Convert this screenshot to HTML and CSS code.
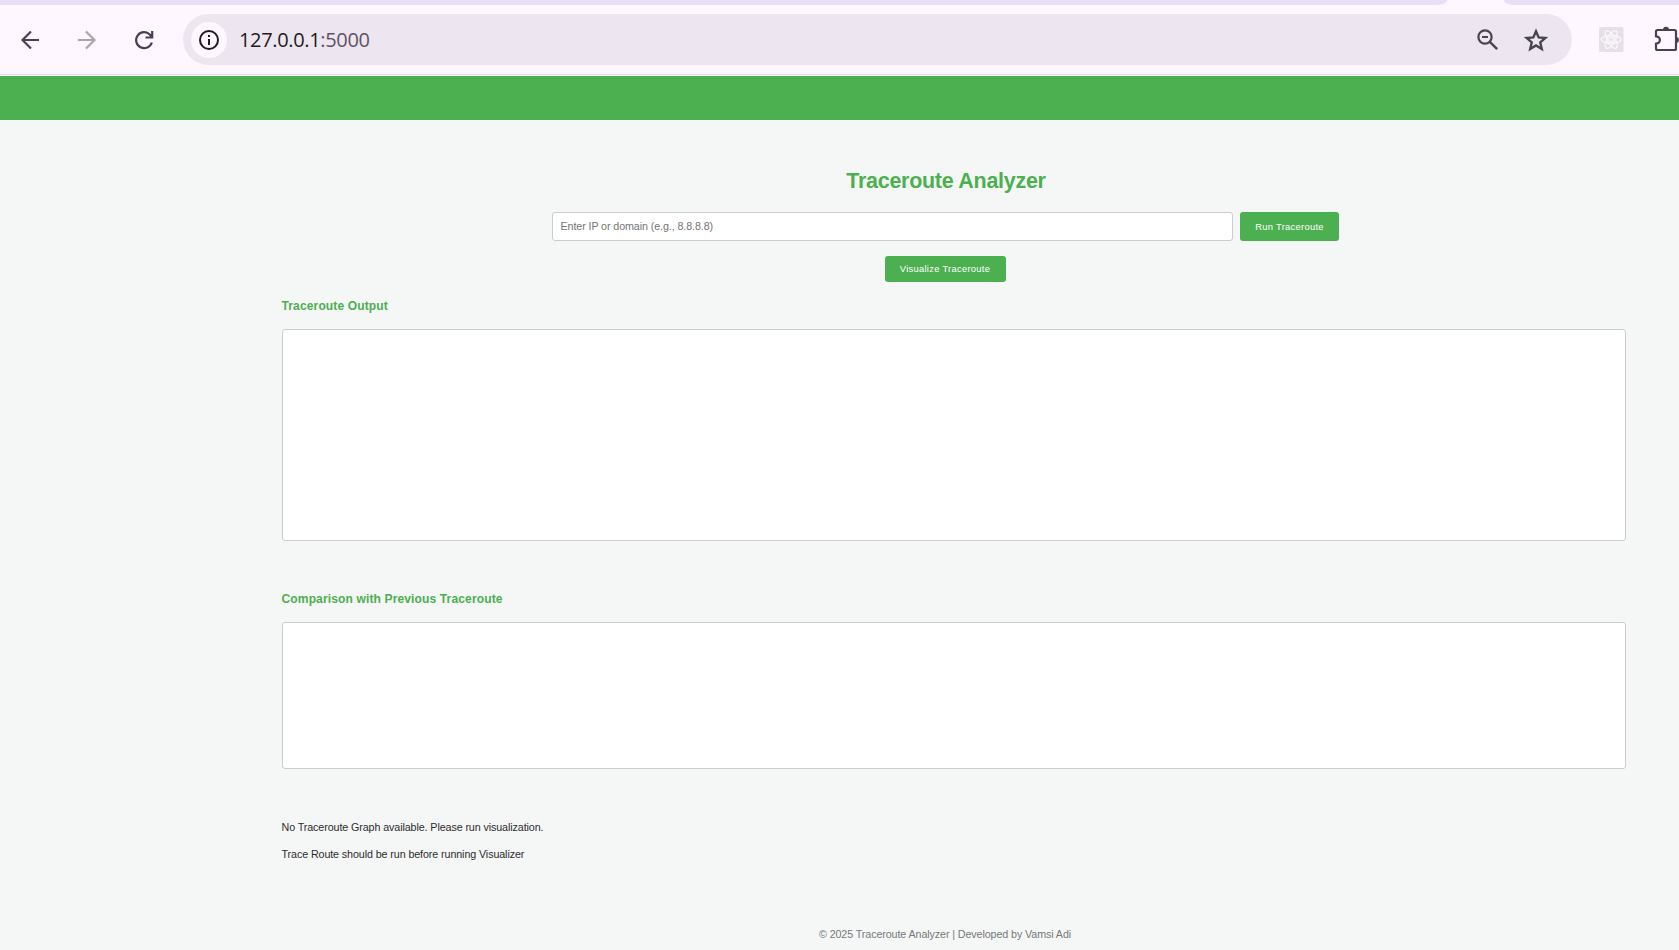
FILE: index.html
```html
<!DOCTYPE html>
<html lang="en">
<head>
<meta charset="utf-8">
<title>Traceroute Analyzer</title>
<link rel="stylesheet" href="styles.css">
</head>
<body>
<div class="tabstrip"><div class="tab-left"></div><div class="tab-right"></div></div>
<div class="toolbar">
  <svg class="nav" viewBox="0 0 183 69" width="183" height="69">
    <g fill="none" stroke-width="2.2">
      <path d="M39 35H22.500M31 26.500 22.500 35l8.500 8.500" stroke="#4a4056"/>
      <path d="M78 35h16.500M86 26.500l8.500 8.500-8.500 8.500" stroke="#aaa4ad"/>
      <path d="M151.800 37.500a8 8 0 1 1-1.800-7.800l2 2.300M152.200 26v6.500h-6.700" stroke="#4a4056"/>
    </g>
  </svg>
  <div class="omnibox">
    <div class="site-info">
      <svg viewBox="0 0 20 20" width="20" height="20"><circle cx="10" cy="10" r="9" fill="none" stroke="#1d1a20" stroke-width="2"/><path d="M9 9h2v6H9zM9 5h2v2H9z" fill="#1d1a20"/></svg>
    </div>
    <span class="url">127.0.0.1<span class="port">:5000</span></span>
    <svg class="tools" viewBox="0 0 72 24" width="72" height="24" fill="none" stroke="#49454e">
      <circle cx="8" cy="9" r="6.600" stroke-width="2.200"/><path d="M5 9h6" stroke-width="2"/><path d="M12.800 13.800l7.400 7.400" stroke-width="2.400"/>
      <path d="M59 3.200l2.650 6.200 6.700.6-5.100 4.400 1.550 6.600-5.800-3.500-5.800 3.500 1.550-6.600-5.100-4.400 6.700-.6z" stroke-width="2.400"/>
    </svg>
  </div>
  <svg class="extensions" viewBox="0 0 80 28" width="80" height="28">
    <rect y="2" width="24.500" height="25" rx="1.500" fill="#e5dfe6"/>
    <g fill="none" stroke="#fbf5fc" stroke-width="1.300">
      <ellipse cx="12.200" cy="14.500" rx="10" ry="4"/>
      <ellipse cx="12.200" cy="14.500" rx="10" ry="4" transform="rotate(60 12.200 14.500)"/>
      <ellipse cx="12.200" cy="14.500" rx="10" ry="4" transform="rotate(120 12.200 14.500)"/>
      <circle cx="12.200" cy="14.500" r="2.200"/>
    </g>
    <path d="M58.500 5h17q1.500 0 1.500 1.500V23.500q0 1.500-1.500 1.500h-17q-1.500 0-1.500-1.500v-4.800q3.900-.5 3.900-3.700t-3.900-3.700V6.500Q57 5 58.500 5z" fill="none" stroke="#4a4056" stroke-width="2.200"/>
    <path d="M64 5a3 3.300 0 0 1 6 0zM77 12a3 3 0 0 1 0 6z" fill="#4a4056"/>
  </svg>
</div>
<header class="banner"></header>
<main class="container">
  <h1>Traceroute Analyzer</h1>
  <form class="trace-form">
    <input class="target" type="text" placeholder="Enter IP or domain (e.g., 8.8.8.8)">
    <button class="btn run" type="button">Run Traceroute</button>
  </form>
  <button class="btn visualize" type="button">Visualize Traceroute</button>
  <h3 class="output-title">Traceroute Output</h3>
  <div class="box output"></div>
  <h3 class="comparison-title">Comparison with Previous Traceroute</h3>
  <div class="box comparison"></div>
  <p class="note graph-note">No Traceroute Graph available. Please run visualization.</p>
  <p class="note">Trace Route should be run before running Visualizer</p>
</main>
<footer>© 2025 Traceroute Analyzer | Developed by Vamsi Adi</footer>
</body>
</html>
```
FILE: styles.css
```css
* { box-sizing: border-box; }
body {
  margin: 0;
  height: 950px;
  overflow: hidden;
  background: #f5f7f7;
  font-family: "Liberation Sans", Arial, sans-serif;
  font-size: 10.72px;
  letter-spacing: -0.1px;
  color: #2c2c2c;
}
.tabstrip { height: 5px; display: flex; justify-content: space-between; background: #fef7ff; }
.tab-left { width: 1447px; background: #eaddf6; border-bottom-right-radius: 10px 5px; }
.tab-right { width: 175px; background: #eaddf6; border-bottom-left-radius: 10px 5px; }
.toolbar {
  height: 71px;
  display: flex;
  background: linear-gradient(#fef7ff 69px, #e7e0e8 69px, #e7e0e8 70px, #fff 70px);
}
.nav { flex: none; }
.omnibox {
  flex: none;
  width: 1389px;
  height: 51px;
  margin-top: 9px;
  padding: 0 23px 0 8px;
  display: flex;
  align-items: center;
  border-radius: 26px;
  background: #ede6f0;
}
.site-info {
  width: 36px;
  height: 36px;
  display: grid;
  place-items: center;
  border-radius: 50%;
  background: #fef7ff;
}
.url {
  margin-left: 12px;
  flex: 1;
  font: 20px "Open Sans", "Noto Sans", sans-serif;
  letter-spacing: -0.34px;
  color: #1d1b20;
}
.port { color: #5b5561; }
.tools { flex: none; }
.extensions { flex: none; margin: 20px 0 0 27px; }
.banner { height: 44px; background: #4caf50; }
.container { width: 1327px; margin-left: 281.5px; display: flex; flex-direction: column; }
h1 {
  margin: 48px 0 0;
  padding-left: 2px;
  height: 44px;
  line-height: 26px;
  text-align: center;
  font-size: 21.44px;
  letter-spacing: -0.25px;
  color: #4caf50;
}
.trace-form { display: flex; justify-content: center; gap: 7px; margin-left: 1px; width: 1326px; }
.target {
  width: 681px;
  height: 29px;
  padding: 0 7.5px 2px;
  border: 1px solid #ccc;
  border-radius: 3px;
  font: 10.72px "Liberation Sans", Arial, sans-serif;
  letter-spacing: -0.1px;
}
.target::placeholder { color: #757575; }
.btn {
  padding: 0 0 1px;
  border: 0;
  border-radius: 3px;
  background: #4caf50;
  color: #fff;
  font: 9.4px "Liberation Sans", Arial, sans-serif;
  letter-spacing: 0.28px;
}
.run { width: 99px; height: 29px; }
.visualize { width: 121px; height: 26px; padding-bottom: 2px; margin-top: 15px; align-self: center; }
h3 { margin: 0; font-size: 12.06px; line-height: 14px; letter-spacing: 0.12px; color: #4caf50; }
.output-title { margin-top: 17px; }
.comparison-title { margin-top: 51px; }
.box { width: 1344px; margin-top: 16px; background: #fff; border: 1px solid #ccc; border-radius: 3px; }
.output { height: 212px; }
.comparison { height: 147px; }
.note { margin: 15px 0 0; line-height: 12px; }
.graph-note { margin-top: 52px; }
footer { width: 1327px; margin: 68px 0 0 281.5px; line-height: 12px; text-align: center; color: #777; }
```
